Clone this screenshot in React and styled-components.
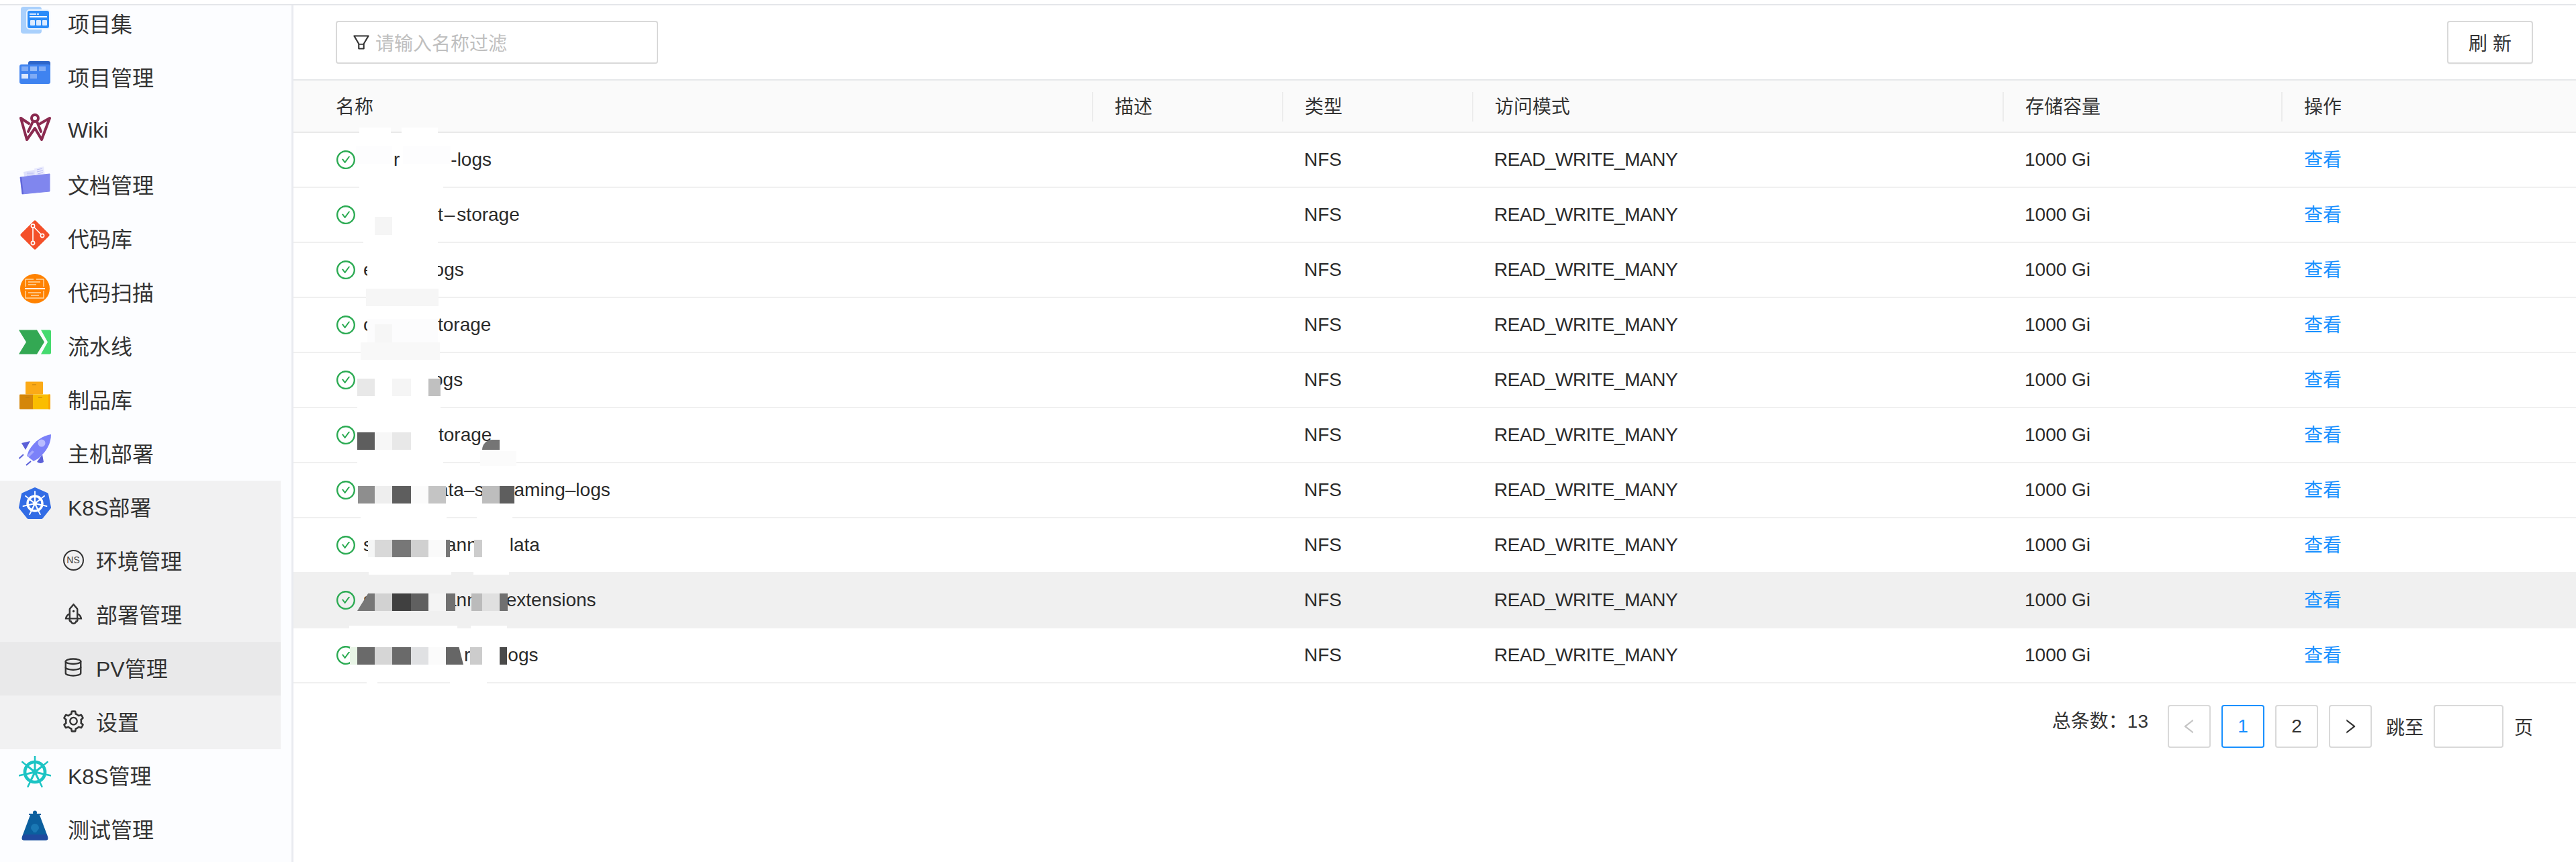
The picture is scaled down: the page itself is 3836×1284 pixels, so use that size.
import React from 'react'
import styled, { createGlobalStyle } from 'styled-components'
import { AiOutlineCheckCircle, AiOutlineFilter, AiOutlineLeft, AiOutlineRight, AiOutlineRocket, AiOutlineSetting } from 'react-icons/ai'
import { Database } from 'lucide-react'

const GlobalStyle = createGlobalStyle`
  html, body { margin: 0; padding: 0; background: #fff; }
  * { box-sizing: border-box; }
  body {
    font-family: "Liberation Sans", "Noto Sans CJK SC", sans-serif;
    color: #333;
  }
`

const Page = styled.div`
  position: relative;
  width: 3836px;
  height: 1284px;
  overflow: hidden;
  display: flex;
  flex-direction: column;
`

const TopLine = styled.div`
  flex: none;
  height: 8px;
  border-bottom: 2px solid #e4e6ea;
`

const Body = styled.div`
  flex: 1;
  display: flex;
  min-height: 0;
`

const Sidebar = styled.aside`
  flex: none;
  width: 437px;
  padding-right: 16px;
  background: #fcfdff;
  border-right: 3px solid #e9ebf0;
  overflow: hidden;
`

const MenuList = styled.nav`
  margin-top: -12px;
  display: flex;
  flex-direction: column;
`

const MenuGroup = styled.div`
  background: #f1f1f2;
`

const MenuItem = styled.div`
  height: 80px;
  display: flex;
  align-items: center;
  gap: 25px;
  padding: 0 0 4px 28px;
  font-size: 32px;
  color: #333;
`

const SubItem = styled.div`
  height: 80px;
  display: flex;
  align-items: center;
  gap: 18px;
  padding: 0 0 4px 93px;
  font-size: 32px;
  color: #333;
  background: ${p => (p.$active ? '#e9e9ea' : 'transparent')};
`

const MenuIcon = styled.svg`
  flex: none;
  width: 48px;
  height: 48px;
  margin-bottom: 9px;
`

const SubIcon = styled.span`
  flex: none;
  width: 32px;
  height: 32px;
  display: flex;
  align-items: center;
  justify-content: center;
  color: #333;
  svg { flex: none; }
`

const NsBadge = styled.span`
  flex: none;
  width: 31px;
  height: 31px;
  border: 2.5px solid #333;
  border-radius: 50%;
  display: flex;
  align-items: center;
  justify-content: center;
  font-size: 14px;
  color: #444;
`

const Main = styled.main`
  flex: 1;
  min-width: 0;
  font-size: 28px;
`

const Toolbar = styled.div`
  height: 110px;
  display: flex;
  justify-content: space-between;
  align-items: center;
  padding: 0 64px 0 63px;
`

const FilterBox = styled.div`
  width: 480px;
  height: 64px;
  display: flex;
  align-items: center;
  gap: 6px;
  padding-left: 21px;
  border: 2px solid #d9d9d9;
  border-radius: 4px;
  color: #bfbfbf;
  svg { color: #333; }
`

const RefreshButton = styled.button`
  width: 128px;
  height: 64px;
  padding: 0;
  background: #fff;
  border: 2px solid #d9d9d9;
  border-radius: 4px;
  box-shadow: 0 2px 0 rgba(0, 0, 0, 0.015);
  font: inherit;
  color: #333;
`

const COLUMNS = '1189px 283px 283px 790px 415px 439px'

const HeaderRow = styled.div`
  display: grid;
  grid-template-columns: ${COLUMNS};
  height: 80px;
  align-items: center;
  background: #fafafa;
  border-top: 2px solid #e6e8ea;
  border-bottom: 2px solid #e9e9e9;
`

const HeaderCell = styled.div`
  position: relative;
  padding: 3px 0 0 ${p => (p.$first ? 63 : 34)}px;
  line-height: 40px;
  &::before {
    content: ${p => (p.$first ? 'none' : '""')};
    position: absolute;
    left: 0;
    top: 0;
    width: 2px;
    height: 44px;
    background: #ececec;
  }
`

const Row = styled.div`
  display: grid;
  grid-template-columns: ${COLUMNS};
  height: 82px;
  align-items: center;
  border-bottom: 2px solid #f0f0f0;
  background: ${p => (p.$hover ? '#f0f0f0' : '#fff')};
`

const NameCell = styled.div`
  display: flex;
  align-items: center;
  padding-left: 62px;
  gap: 10px;
  white-space: pre;
  color: #2b2b2b;
`

const StatusIcon = styled(AiOutlineCheckCircle)`
  flex: none;
  width: 32px;
  height: 32px;
  color: #2cab53;
`

const NameText = styled.span`
  display: flex;
  align-items: center;
`

const Hidden = styled.span`
  display: inline-block;
  width: ${p => p.$w}px;
`

const Cell = styled.div`
  padding-left: 33px;
  color: #2b2b2b;
  letter-spacing: ${p => (p.$tight ? '-0.45px' : 'normal')};
`

const ViewLink = styled.a`
  display: block;
  margin: 0 0 4px 1px;
  color: #1890ff;
`

const Pagination = styled.div`
  display: flex;
  align-items: center;
  justify-content: flex-end;
  gap: 16px;
  padding: 32px 64px 0 0;
`

const Total = styled.span`
  margin: 0 13px 15px 0;
  line-height: 28px;
`

const PageButton = styled.div`
  width: 64px;
  height: 64px;
  display: flex;
  align-items: center;
  justify-content: center;
  background: #fff;
  border: 2px solid ${p => (p.$active ? '#1890ff' : '#d9d9d9')};
  border-radius: 4px;
  color: ${p => (p.$active ? '#1890ff' : p.$disabled ? '#c4c4c4' : '#333')};
`

const JumpLabel = styled.span`
  margin-left: 5px;
`

const JumpInput = styled.div`
  width: 104px;
  height: 64px;
  margin-left: -1px;
  background: #fff;
  border: 2px solid #d9d9d9;
  border-radius: 4px;
`

// mosaic that hides the volume names, sits over the table in page coordinates
const Redaction = styled.div`
  position: absolute;
  inset: 0;
  pointer-events: none;
`

const Patch = styled.div`
  position: absolute;
  left: ${p => p.$x}px;
  top: ${p => p.$y}px;
  width: ${p => p.$w}px;
  height: ${p => p.$h}px;
  background: ${p => p.$c};
  clip-path: ${p => p.$clip || 'none'};
  border-top-left-radius: ${p => p.$round || 0}px;
`

const WHITE = '#fff'

const PATCHES = [
  // white smears across the row lines
  [535, 190, 47, 10, WHITE], [598, 190, 54, 10, WHITE],
  [530, 218, 54, 26, '#fdfdfe'], [600, 218, 71, 26, '#fdfdfe'],
  [535, 272, 125, 12, WHITE],
  [541, 356, 111, 10, WHITE],
  [547, 385, 105, 45, WHITE],
  [547, 438, 106, 10, '#f5f5f5'],
  [545, 430, 108, 26, '#f6f6f6'],
  [547, 475, 105, 35, '#fcfcfd'],
  [558, 483, 26, 27, '#f6f6f6'],
  [537, 510, 118, 26, '#f8f8f8'],
  [532, 545, 120, 19, WHITE],
  [612, 564, 26, 26, WHITE],
  [532, 600, 124, 14, WHITE],
  [532, 682, 128, 14, WHITE], [715, 672, 54, 22, '#fbfbfb'],
  [537, 766, 128, 10, WHITE], [710, 766, 53, 10, WHITE],
  [549, 830, 123, 26, WHITE], [705, 830, 53, 26, WHITE],
  [520, 932, 161, 8, WHITE], [701, 932, 54, 8, WHITE],
  [546, 1014, 16, 5, WHITE], [670, 1014, 55, 5, WHITE],
  [558, 323, 26, 27, '#f5f5f5'],
  // row 5
  [532, 564, 26, 26, '#e8e8e8'], [584, 564, 28, 26, '#f5f5f5'], [638, 564, 18, 26, '#c0c0c0'],
  // row 6
  [532, 644, 26, 26, '#5e5e5e'], [558, 644, 26, 26, '#f7f7f7'], [584, 644, 28, 26, '#e8e8e8'],
  [718, 655, 26, 15, '#757575', null, 22],
  // row 7
  [533, 724, 25, 26, '#8e8e8e'], [558, 724, 26, 26, '#eeeeee'], [584, 724, 28, 26, '#5e5e5e'],
  [612, 724, 26, 26, '#fbfbfb'], [638, 724, 26, 26, '#c4c4c4'], [718, 724, 26, 26, '#bdbdbd'], [744, 724, 22, 26, '#5e5e5e'],
  // row 8
  [548, 804, 10, 26, '#f5f6f6'], [558, 804, 26, 26, '#d8d8d8'], [584, 804, 28, 26, '#777777'],
  [612, 804, 26, 26, '#d0d0d0'], [638, 804, 26, 26, '#fafafa'], [664, 804, 6, 26, '#777777'], [706, 804, 12, 26, '#cccccc'],
  // row 9
  [532, 884, 26, 26, '#777777', 'polygon(0 100%, 100% 100%, 100% 0, 62% 0)'], [558, 884, 26, 26, '#d2d2d2'],
  [584, 884, 28, 26, '#404040'], [612, 884, 26, 26, '#606060'], [638, 884, 26, 26, '#f4f4f4'],
  [664, 884, 14, 26, '#707070'], [702, 884, 16, 26, '#bbbbbb'], [718, 884, 26, 26, '#e0e0e0'], [744, 884, 12, 26, '#707070'],
  // row 10
  [521, 964, 11, 26, '#e8f5e6'], [532, 964, 26, 26, '#6a6a6a'], [558, 964, 26, 26, '#d6d6d6'], [584, 964, 28, 26, '#6a6a6a'],
  [612, 964, 26, 26, '#e0e1e3'], [638, 964, 26, 26, '#fbfbfb'],
  [664, 964, 26, 26, '#666666', 'polygon(0 0, 75% 0, 100% 100%, 0 100%)'],
  [700, 964, 18, 26, '#cccccc'], [718, 964, 26, 26, '#ffffff'], [744, 964, 11, 26, '#4a4a4a'],
]

// numbers are the pixel width of a masked stretch of the name
const VOLUMES = [
  [45, 'r', 76, '-logs'],
  [111, 't', 2, '–', 3, 'storage'],
  ['e', 89, 'ogs'],
  ['c', 97, 'torage'],
  [103, 'ogs'],
  [112, 'torage'],
  [111, 'ata–s', 45, 'aming–logs'],
  ['s', 109, 'ann', 48, 'lata'],
  ['s', 109, 'ann', 43, 'extensions'],
  [150, 'r', 56, 'ogs'],
]

const Wheel = ({ ring, spoke, hub, r, arm }) => {
  const angles = [0, 1, 2, 3, 4, 5, 6].map(i => ((i * 360) / 7 - 90) * (Math.PI / 180))
  return (
    <>
      <circle cx="24" cy="24" r={r} fill="none" stroke={ring} strokeWidth={r / 3.2} />
      {angles.map((a, i) => (
        <g key={i} stroke={spoke} strokeLinecap="round">
          <line x1="24" y1="24" x2={24 + Math.cos(a) * r} y2={24 + Math.sin(a) * r} strokeWidth={r / 5} />
          <line x1={24 + Math.cos(a) * r} y1={24 + Math.sin(a) * r} x2={24 + Math.cos(a) * arm} y2={24 + Math.sin(a) * arm} strokeWidth={r / 6} />
        </g>
      ))}
      <circle cx="24" cy="24" r={r / 3.6} fill={hub} />
    </>
  )
}

const ProjectSetIcon = () => (
  <MenuIcon viewBox="0 0 48 48">
    <rect x="3" y="4" width="31" height="40" rx="4" fill="#a9d0fc" />
    <rect x="12" y="9" width="34" height="28" rx="4" fill="#2a8cf9" stroke="#eef6ff" strokeWidth="2" />
    <rect x="16" y="14" width="10" height="2" fill="#d8e9ff" />
    <rect x="27" y="14" width="3" height="2" fill="#d8e9ff" />
    <rect x="16" y="18" width="26" height="2" fill="#fff" />
    <rect x="17" y="24" width="7" height="8" rx="1" fill="#dcebff" />
    <rect x="26" y="24" width="7" height="8" rx="1" fill="#dcebff" />
    <rect x="35" y="24" width="7" height="8" rx="1" fill="#dcebff" />
  </MenuIcon>
)

const ProjectIcon = () => (
  <MenuIcon viewBox="0 0 48 48">
    <rect x="14" y="5" width="33" height="30" rx="3" fill="#2e66c9" />
    <rect x="1" y="10" width="46" height="29" rx="3" fill="#3f83f0" />
    <rect x="4" y="13" width="10" height="7" fill="#7fabf5" />
    <rect x="17" y="13" width="10" height="7" fill="#94baf7" />
    <rect x="30" y="13" width="10" height="7" fill="#7fabf5" />
    <rect x="4" y="24" width="10" height="7" fill="#dbe7fc" />
    <rect x="17" y="24" width="10" height="7" fill="#7fabf5" />
  </MenuIcon>
)

const WikiIcon = () => (
  <MenuIcon viewBox="0 0 48 48">
    <g fill="none" stroke="#8a2a50" strokeWidth="4" strokeLinejoin="round" strokeLinecap="round">
      <path d="M3 10 L12 42 L24 25 L34 42 L46 10 L32 18" />
      <path d="M3 10 L15 18" />
      <circle cx="24" cy="10" r="5" />
      <path d="M21 15 L14 30 M27 15 L33 30" />
    </g>
  </MenuIcon>
)

const DocIcon = () => (
  <MenuIcon viewBox="0 0 48 48">
    <path d="M7 10 L24 7 L26 19 L9 22Z" fill="#dfe1fb" />
    <path d="M23 5 L37 2 L39 16 L25 19Z" fill="#e9eafd" />
    <path d="M12 12 H22 M12 15 H22 M27 7 L35 5 M27 10 L36 8 M28 13 L36 11" stroke="#b8bbf3" strokeWidth="1" />
    <path d="M2 18 L46 13 V39 L5 43Z" fill="#8086ee" stroke="#8086ee" strokeLinejoin="round" />
    <path d="M2 18 L5 43 L7 43 L4 18Z" fill="#5f65d8" />
  </MenuIcon>
)

const GitIcon = () => (
  <MenuIcon viewBox="0 0 48 48">
    <rect x="8" y="8" width="32" height="32" rx="2.5" transform="rotate(45 24 24)" fill="#f4502a" />
    <g fill="none" stroke="#fff" strokeWidth="1.6">
      <path d="M21 12.5 V33.5 M22.3 12 L33.5 23.5" />
      <circle cx="21" cy="10.5" r="2.6" fill="#f4502a" />
      <circle cx="35" cy="25" r="2.6" fill="#f4502a" />
      <circle cx="21" cy="36" r="2.6" fill="#f4502a" />
    </g>
  </MenuIcon>
)

const ScanIcon = () => (
  <MenuIcon viewBox="0 0 48 48">
    <circle cx="24" cy="24" r="22" fill="#ff8200" />
    <g fill="none" stroke="#ffd9a8" strokeWidth="1.4">
      <path d="M9 24 H39" stroke="#fff" strokeWidth="1.8" />
      <path d="M10 21 V10 H22 M26 10 H37 V21" />
      <path d="M14 14 H32 M14 18 H26" />
      <path d="M10 27 V38 H37 V27" />
      <path d="M14 30 H33 M18 34 H30" />
    </g>
  </MenuIcon>
)

const PipelineIcon = () => (
  <MenuIcon viewBox="0 0 48 48">
    <polygon points="0,5.5 27,5.5 38,23.5 27,41.5 0,41.5 11,23.5" fill="#33a853" />
    <path d="M33 5.5 H46 a2 2 0 0 1 2 2 V39.5 a2 2 0 0 1 -2 2 H33 L43 23.5 Z" fill="#45da6f" />
  </MenuIcon>
)

const ArtifactIcon = () => (
  <MenuIcon viewBox="0 0 48 48">
    <rect x="10" y="2.5" width="26" height="19" rx="1" fill="#fbaa17" />
    <rect x="1" y="21.5" width="21" height="22" rx="1" fill="#d4860a" />
    <rect x="21" y="21.5" width="26" height="22" rx="1" fill="#fabd00" />
    <rect x="44" y="21.5" width="3" height="22" rx="1" fill="#f9a400" />
    <path d="M20 7 H26 M10 26 H16 M29 26 H35" stroke="#b97a10" strokeWidth="1" />
  </MenuIcon>
)

const RocketIcon = () => (
  <MenuIcon viewBox="0 0 48 48">
    <path d="M4 14 L17 11 L10 24Z" fill="#5b60d8" />
    <path d="M27 42 L35 31 L37 42 Q33 46 27 42Z" fill="#5b60d8" />
    <path d="M48 1 C36 3 24 10 15 25 L12 33 L22 41 L29 37 C42 26 48 14 48 1Z" fill="#7b81f9" />
    <path d="M12 33 L20 25 L23 27 L15 35Z" fill="#a6a9fc" />
    <circle cx="34" cy="14" r="5.5" fill="#b9bcff" />
    <path d="M0.5 37 L7 31 M11 47 L18 41" stroke="#5b60d8" strokeWidth="2" />
  </MenuIcon>
)

const K8sIcon = () => (
  <MenuIcon viewBox="0 0 48 48">
    <polygon points="24,2 42,10 46,30 34,45 14,45 2,30 6,10" fill="#326ce5" stroke="#326ce5" strokeWidth="4" strokeLinejoin="round" />
    <Wheel ring="#fff" spoke="#fff" hub="#fff" r={11} arm={18} />
  </MenuIcon>
)

const K8sAdminIcon = () => (
  <MenuIcon viewBox="0 0 48 48">
    <Wheel ring="#1cc4c4" spoke="#1cc4c4" hub="#1cc4c4" r={15} arm={24} />
  </MenuIcon>
)

const FlaskIcon = () => (
  <MenuIcon viewBox="0 0 48 48">
    <circle cx="24" cy="4.5" r="3" fill="#0b5f9e" />
    <path d="M15 6 H33 V8 H31 L43 40 Q45 45.5 40 45.5 H8 Q3 45.5 5 40 L17 8 H15Z" fill="#0b5f9e" />
    <path d="M6.6 37 H41.4 L43 41 Q44 45.5 40 45.5 H8 Q4 45.5 5 41Z" fill="#1f4a9f" />
    <path d="M24 21 a6 6 0 0 1 6 6 c0 3 -3 4 -4 7 h-4 c-1 -3 -4 -4 -4 -7 a6 6 0 0 1 6 -6Z" fill="#1a78b4" />
  </MenuIcon>
)

const TOP_MENU = [
  ['项目集', ProjectSetIcon],
  ['项目管理', ProjectIcon],
  ['Wiki', WikiIcon],
  ['文档管理', DocIcon],
  ['代码库', GitIcon],
  ['代码扫描', ScanIcon],
  ['流水线', PipelineIcon],
  ['制品库', ArtifactIcon],
  ['主机部署', RocketIcon],
]

const App = () => (
  <Page>
    <GlobalStyle />
    <TopLine />
    <Body>
      <Sidebar>
        <MenuList>
          {TOP_MENU.map(([label, Icon]) => (
            <MenuItem key={label}><Icon />{label}</MenuItem>
          ))}
          <MenuGroup>
            <MenuItem><K8sIcon />K8S部署</MenuItem>
            <SubItem><SubIcon><NsBadge>NS</NsBadge></SubIcon>环境管理</SubItem>
            <SubItem><SubIcon><AiOutlineRocket size={37} /></SubIcon>部署管理</SubItem>
            <SubItem $active><SubIcon><Database size={30} strokeWidth={1.9} /></SubIcon>PV管理</SubItem>
            <SubItem><SubIcon><AiOutlineSetting size={37} /></SubIcon>设置</SubItem>
          </MenuGroup>
          <MenuItem><K8sAdminIcon />K8S管理</MenuItem>
          <MenuItem><FlaskIcon />测试管理</MenuItem>
        </MenuList>
      </Sidebar>
      <Main>
        <Toolbar>
          <FilterBox><AiOutlineFilter size={30} />请输入名称过滤</FilterBox>
          <RefreshButton>刷 新</RefreshButton>
        </Toolbar>
        <HeaderRow>
          <HeaderCell $first>名称</HeaderCell>
          <HeaderCell>描述</HeaderCell>
          <HeaderCell>类型</HeaderCell>
          <HeaderCell>访问模式</HeaderCell>
          <HeaderCell>存储容量</HeaderCell>
          <HeaderCell>操作</HeaderCell>
        </HeaderRow>
        {VOLUMES.map((parts, i) => (
          <Row key={i} $hover={i === 8}>
            <NameCell>
              <StatusIcon />
              <NameText>
                {parts.map((part, j) => (typeof part === 'number' ? <Hidden key={j} $w={part} /> : <span key={j}>{part}</span>))}
              </NameText>
            </NameCell>
            <Cell />
            <Cell>NFS</Cell>
            <Cell $tight>READ_WRITE_MANY</Cell>
            <Cell>1000 Gi</Cell>
            <Cell><ViewLink>查看</ViewLink></Cell>
          </Row>
        ))}
        <Pagination>
          <Total>总条数：13</Total>
          <PageButton $disabled><AiOutlineLeft size={28} /></PageButton>
          <PageButton $active>1</PageButton>
          <PageButton>2</PageButton>
          <PageButton><AiOutlineRight size={28} /></PageButton>
          <JumpLabel>跳至</JumpLabel>
          <JumpInput />
          <span>页</span>
        </Pagination>
      </Main>
    </Body>
    <Redaction>
      {PATCHES.map(([x, y, w, h, c, clip, round], i) => (
        <Patch key={i} $x={x} $y={y} $w={w} $h={h} $c={c} $clip={clip} $round={round} />
      ))}
    </Redaction>
  </Page>
)

export default App
